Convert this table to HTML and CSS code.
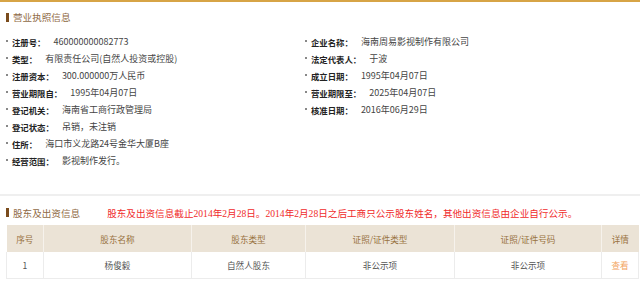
FILE: index.html
```html
<!DOCTYPE html>
<html lang="zh-CN">
<head>
<meta charset="utf-8">
<title>营业执照信息</title>
<link rel="stylesheet" href="styles.css">
</head>
<body>
<div class="topline"></div>
<section class="license">
  <h2 class="sec-title">营业执照信息</h2>
  <div class="info">
    <ul class="col col-left">
      <li><span class="lbl">注册号：</span><span class="val">460000000082773</span></li>
      <li><span class="lbl">类型：</span><span class="val">有限责任公司(自然人投资或控股)</span></li>
      <li><span class="lbl">注册资本：</span><span class="val">300.000000万人民币</span></li>
      <li><span class="lbl">营业期限自：</span><span class="val">1995年04月07日</span></li>
      <li><span class="lbl">登记机关：</span><span class="val">海南省工商行政管理局</span></li>
      <li><span class="lbl">登记状态：</span><span class="val">吊销，未注销</span></li>
      <li><span class="lbl">住所：</span><span class="val">海口市义龙路24号金华大厦B座</span></li>
      <li><span class="lbl">经营范围：</span><span class="val">影视制作发行。</span></li>
    </ul>
    <ul class="col col-right">
      <li><span class="lbl">企业名称：</span><span class="val">海南周易影视制作有限公司</span></li>
      <li><span class="lbl">法定代表人：</span><span class="val">于波</span></li>
      <li><span class="lbl">成立日期：</span><span class="val">1995年04月07日</span></li>
      <li><span class="lbl">营业期限至：</span><span class="val">2025年04月07日</span></li>
      <li><span class="lbl">核准日期：</span><span class="val">2016年06月29日</span></li>
    </ul>
  </div>
</section>
<section class="holders">
  <div class="head">
    <h2 class="sec-title">股东及出资信息</h2>
    <p class="notice">股东及出资信息截止2014年2月28日。2014年2月28日之后工商只公示股东姓名，其他出资信息由企业自行公示。</p>
  </div>
  <table class="grid">
    <colgroup>
      <col class="c1"><col class="c2"><col class="c3"><col class="c4"><col class="c5"><col class="c6">
    </colgroup>
    <thead>
      <tr><th>序号</th><th>股东名称</th><th>股东类型</th><th>证照/证件类型</th><th>证照/证件号码</th><th>详情</th></tr>
    </thead>
    <tbody>
      <tr><td>1</td><td>杨俊毅</td><td>自然人股东</td><td>非公示项</td><td>非公示项</td><td><a class="link" href="#">查看</a></td></tr>
    </tbody>
  </table>
</section>
</body>
</html>
```
FILE: styles.css
```css
html, body {
  margin: 0;
  padding: 0;
  background: #fff;
}
body {
  font-family: "Noto Sans CJK SC", "Noto Sans", sans-serif;
  color: #333;
  width: 640px;
  height: 282px;
  overflow: hidden;
}
.topline {
  height: 2px;
  background: #d7a446;
}
.license {
  padding: 8px 0 0 6px;
  height: 194px;
  border-bottom: 2px solid #efefef;
  box-sizing: border-box;
}
.sec-title {
  margin: 0;
  font-weight: normal;
  font-size: 9.6px;
  color: #8f6a45;
  display: flex;
  align-items: center;
  line-height: 14px;
}
.sec-title::before {
  content: "";
  width: 3px;
  height: 9px;
  background: #7a4b1c;
  margin-right: 4px;
}
.info {
  display: flex;
  margin-top: 9px;
}
.col {
  list-style: none;
  margin: 0;
  padding: 0;
}
.col-left {
  width: 299px;
}
.col li {
  display: flex;
  align-items: center;
  height: 17px;
  white-space: nowrap;
}
.col li::before {
  content: "";
  width: 2px;
  height: 2px;
  background: #888;
  margin-right: 4px;
  align-self: flex-start;
  margin-top: 7px;
}
.lbl {
  font-weight: bold;
  font-size: 8.4px;
  color: #222;
  margin-right: 8px;
}
.val {
  font-size: 9px;
  color: #444;
}
.holders {
  padding: 0 2px 0 6px;
}
.head {
  display: flex;
  align-items: center;
  height: 29px;
  padding-top: 4px;
  box-sizing: border-box;
}
.notice {
  margin: 0 0 0 27px;
  color: #f02b2b;
  font-family: "Liberation Serif", "Noto Sans CJK SC", serif;
  font-size: 9.6px;
  white-space: nowrap;
}
.grid {
  border-collapse: collapse;
  width: 632px;
  table-layout: fixed;
}
.c1 { width: 37px; }
.c2 { width: 148px; }
.c3 { width: 114px; }
.c4 { width: 149px; }
.c5 { width: 147px; }
.c6 { width: 37px; }
.grid th {
  background: #ebe3d6;
  color: #98723f;
  font-weight: normal;
  font-size: 8.6px;
  height: 27px;
  padding: 0;
  border-left: 1px solid #f6f2ec;
}
.grid th:first-child {
  border-left: none;
}
.grid td {
  font-size: 8.6px;
  color: #555;
  text-align: center;
  height: 26px;
  padding: 0;
  border: 1px solid #ececec;
  border-top: none;
}
.link {
  color: #f3a562;
  text-decoration: none;
}
```
